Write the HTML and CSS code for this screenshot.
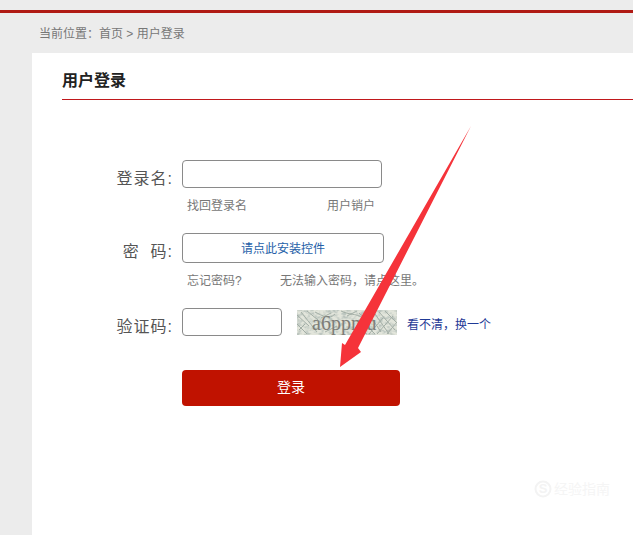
FILE: index.html
```html
<!DOCTYPE html>
<html lang="zh">
<head>
<meta charset="utf-8">
<title>用户登录</title>
<link rel="stylesheet" href="styles.css">
</head>
<body>
<div class="topbar"></div>
<div class="crumb">当前位置：首页 &gt; 用户登录</div>
<main class="panel">
  <h1 class="title">用户登录</h1>
  <form class="form">
    <div class="row row-user">
      <label class="label">登录名:</label>
      <div class="input input-user"></div>
    </div>
    <div class="links links-user"><a class="link link-a">找回登录名</a><a class="link">用户销户</a></div>
    <div class="row row-pass">
      <label class="label">密&nbsp;&nbsp;码:</label>
      <div class="input install">请点此安装控件</div>
    </div>
    <div class="links links-pass"><a class="link link-b">忘记密码?</a><a class="link">无法输入密码，请点这里。</a></div>
    <div class="row row-code">
      <label class="label">验证码:</label>
      <div class="input input-code"></div>
      <div class="captcha">
        <svg class="noise" width="100" height="25" viewBox="0 0 100 25">
          <defs>
            <filter id="grain" x="0" y="0" width="100%" height="100%">
              <feTurbulence type="fractalNoise" baseFrequency="0.22 0.3" numOctaves="2" seed="7"/>
              <feColorMatrix type="matrix" values="0 0 0 0 0.5  0 0 0 0 0.56  0 0 0 0 0.52  3.2 0 0 0 -1.35"/>
            </filter>
          </defs>
          <rect width="100" height="25" fill="#e2e5db"/>
          <rect width="100" height="25" filter="url(#grain)"/>
          <g fill="none" stroke="#a3aea6" stroke-width="1">
            <path d="M0 5L12 16M4 2L20 22M10 1L26 14M0 14L10 24M18 2C26 6 32 10 38 4M24 8L34 3M44 1C52 5 58 3 66 8M50 6L60 1M62 3L72 12"/>
            <path d="M70 1L84 22M76 1L92 24M82 2L98 20M88 1L100 13M72 24L86 8M80 24L96 6M90 24L100 12M68 14L78 24"/>
            <path d="M28 22L40 16M2 20L8 14M60 20L70 24M64 12L72 4"/>
          </g>
        </svg>
        <span class="captcha-text">a6ppmu</span>
      </div>
      <a class="refresh">看不清，换一个</a>
    </div>
    <button class="submit" type="button">登录</button>
  </form>
</main>
<svg class="arrow" width="633" height="535" viewBox="0 0 633 535">
  <path fill="#f5333a" d="M471 126L358 348L361 352L340 367L342 343L345 345Z"/>
</svg>
<div class="mark">
  <svg width="18" height="18" viewBox="0 0 18 18"><circle cx="9" cy="9" r="7.5" fill="none" stroke="#f3f3f3" stroke-width="2"/><text x="9" y="13" text-anchor="middle" class="mark-s">S</text></svg>
  <span class="mark-text">经验指南</span>
</div>
</body>
</html>
```
FILE: styles.css
```css
* { box-sizing: border-box; }
html, body { height: 100%; }
body {
  margin: 0;
  height: 535px;
  overflow: hidden;
  background: #ececec;
  font-family: "Liberation Sans", "Noto Sans CJK SC", sans-serif;
  display: flex;
  flex-direction: column;
  padding-top: 10px;
}
.topbar { height: 3px; background: #b01a14; flex: none; }
.crumb {
  flex: none;
  height: 40px;
  padding: 14px 0 0 39px;
  font-size: 12px;
  line-height: 14px;
  color: #777;
}
.panel {
  flex: 1;
  margin-left: 32px;
  background: #fff;
  padding: 18px 0 0 30px;
}
.title {
  margin: 0;
  height: 29px;
  border-bottom: 1px solid #c0181c;
  font-size: 16px;
  line-height: 20px;
  font-weight: bold;
  color: #222;
}
.form { padding-top: 60px; }
.row { display: flex; align-items: flex-start; }
.label {
  width: 120px;
  padding-right: 9px;
  text-align: right;
  font-size: 16px;
  line-height: 38px;
  letter-spacing: 1px;
  color: #555;
  flex: none;
}
.row-user { height: 28px; }
.row-pass { height: 30px; margin-top: 17px; }
.row-code { height: 28px; margin-top: 17px; }
.input {
  border: 1px solid #8a8a8a;
  border-radius: 4px;
  background: #fff;
  height: 100%;
}
.input-user { width: 200px; }
.install {
  width: 202px;
  text-align: center;
  font-size: 12px;
  line-height: 30px;
  color: #2560a8;
}
.input-code { width: 100px; }
.links {
  display: flex;
  font-size: 12px;
  line-height: 14px;
  color: #777;
  padding-left: 125px;
}
.links-user { padding-top: 11px; height: 28px; }
.links-pass { padding-top: 11px; height: 28px; }
.link-a { width: 140px; }
.link-b { width: 93px; }
.captcha {
  position: relative;
  width: 100px;
  height: 25px;
  margin: 2px 0 0 15px;
  overflow: hidden;
  flex: none;
}
.noise { display: block; }
.captcha-text {
  position: absolute;
  left: 15px;
  top: 1px;
  font-family: "Liberation Serif", serif;
  font-size: 20px;
  line-height: 24px;
  color: #7d7d78;
}
.refresh {
  margin: 10px 0 0 10px;
  font-size: 12px;
  line-height: 14px;
  color: #1f3a96;
  white-space: nowrap;
}
.submit {
  display: block;
  width: 218px;
  height: 36px;
  margin: 34px 0 0 120px;
  border: 0;
  border-radius: 4px;
  background: #c01200;
  color: #fff;
  font-family: inherit;
  font-size: 14px;
  font-weight: normal;
  padding: 0 0 4px;
}
.arrow { position: absolute; left: 0; top: 0; pointer-events: none; }
.mark {
  position: absolute;
  left: 534px;
  top: 480px;
  display: flex;
  align-items: center;
  gap: 2px;
}
.mark-s { font-size: 13px; font-weight: bold; fill: #f3f3f3; font-family: "Liberation Sans", sans-serif; }
.mark-text { font-size: 14px; line-height: 18px; color: #f5f5f5; }
```
